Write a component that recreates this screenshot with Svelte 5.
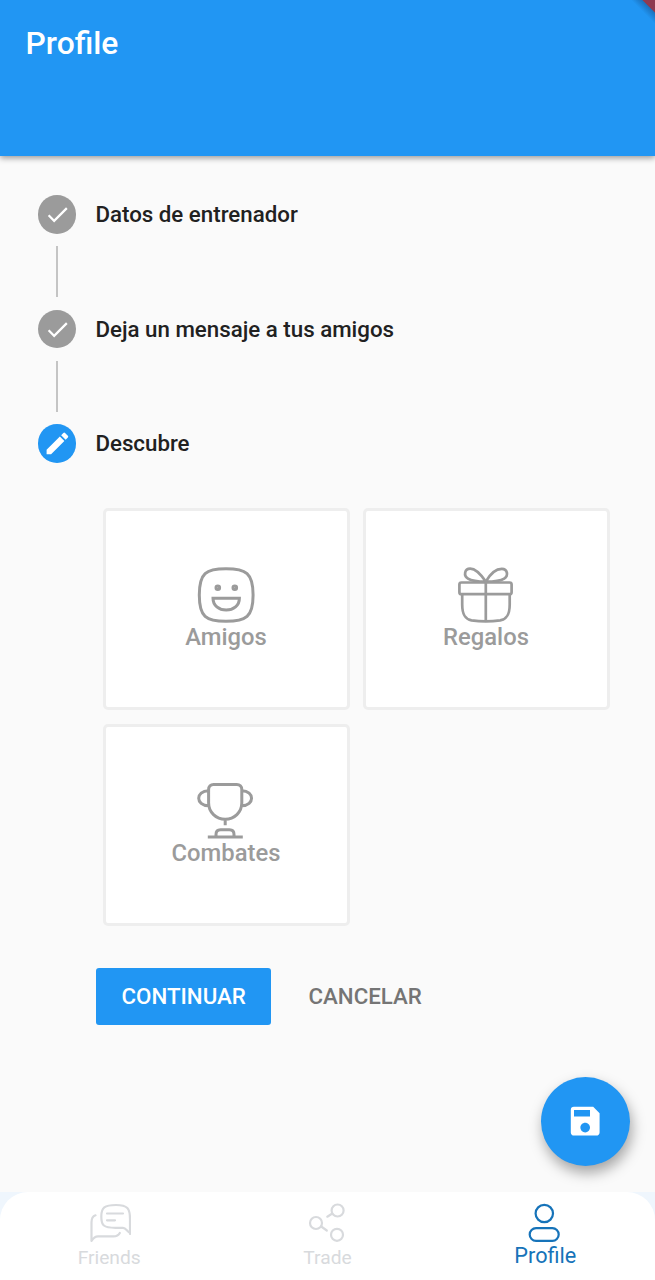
<script lang="ts">
	interface Step {
		title: string;
		active: boolean;
	}

	const steps: Step[] = [
		{ title: 'Datos de entrenador', active: false },
		{ title: 'Deja un mensaje a tus amigos', active: false },
		{ title: 'Descubre', active: true }
	];

	const options = ['Amigos', 'Regalos', 'Combates'];
	const tabs = ['Friends', 'Trade', 'Profile'];

	let selected = $state('Profile');
</script>

<div class="screen">
	<header>
		<h1>Profile</h1>
		<span class="ribbon"></span>
	</header>

	<main>
		{#each steps as step, i}
			{#if i > 0}
				<div class="line"></div>
			{/if}
			<div class="step">
				<span class="badge" class:active={step.active}>
					<svg viewBox="0 0 24 24">
						{#if step.active}
							<path d="M3 17.25V21h3.75L17.81 9.94l-3.75-3.75L3 17.25zM20.71 7.04a1 1 0 0 0 0-1.41l-2.34-2.34a1 1 0 0 0-1.41 0l-1.83 1.83 3.75 3.75 1.83-1.83z" />
						{:else}
							<path d="M9 16.17 4.83 12l-1.42 1.41L9 19 21 7l-1.41-1.41z" />
						{/if}
					</svg>
				</span>
				<h2>{step.title}</h2>
			</div>
		{/each}

		<div class="options">
			{#each options as option}
				<button class="card">
					<svg viewBox="0 0 60 60">
						{#if option === 'Amigos'}
							<path d="M30 3.8C50 3.8 57.1 8 57.1 30S50 56.3 30 56.3 3.3 52 3.3 30 10 3.8 30 3.8z" />
							<circle cx="21.8" cy="22.7" r="1.8" />
							<circle cx="38.8" cy="22.7" r="1.8" />
							<path d="M17 33.2h26.4C43.4 40.5 37.5 45 30.2 45S17 40.5 17 33.2z" />
						{:else if option === 'Regalos'}
							<g stroke-width="2.7">
								<path d="M29.8 16.6C25 9.5 20 3.6 14.2 3.6 8.5 3.6 7.3 10.7 12 13.6c4 2.5 11 3 17.8 3z" />
								<path d="M29.8 16.6c4-7 10-12.8 16-12.8 5.7 0 7 7 2.4 9.8-4 2.5-11.6 3-18.4 3z" />
								<rect x="3.4" y="17.5" width="52.2" height="11.7" rx="2" />
								<path d="M6.200 29.500v10c0 10.500 3 14.600 9.300 15.900 9 1.300 19.500 1.300 28.700 0 6.500-1.300 9.500-5.400 9.500-15.900v-10M29.800 17v39" />
							</g>
						{:else}
							<path d="M12.6 8.5c0-3 2-5 5-5h23.200c3 0 5 2 5 5v13.300c0 9.500-7.500 16.500-16.600 16.500s-16.600-7-16.600-16.500zM12.600 9.800C-.6 9.800-.6 24.800 12.600 24.800M45.800 9.800c13 0 13 15 0 15M29.200 38.300v6M11.800 56h35M20 56v-2.500c0-3 1.500-4.700 4.500-4.700h9c3 0 4.500 1.700 4.500 4.700V56" />
						{/if}
					</svg>
					<span>{option}</span>
				</button>
			{/each}
		</div>

		<div class="actions">
			<button class="continue">CONTINUAR</button>
			<button class="cancel">CANCELAR</button>
		</div>
	</main>

	<button class="fab" aria-label="Guardar">
		<svg viewBox="0 0 24 24">
			<path d="M17 3H5a2 2 0 0 0-2 2v14c0 1.100.890 2 2 2h14c1.100 0 2-.9 2-2V7l-4-4zm-5 16c-1.660 0-3-1.340-3-3s1.340-3 3-3 3 1.340 3 3-1.340 3-3 3zm3-10H5V5h10v4z" />
		</svg>
	</button>

	<div class="nav-wrap">
		<nav>
			{#each tabs as tab}
				<button class="tab" class:selected={selected === tab} onclick={() => (selected = tab)}>
					<svg viewBox="0 0 44 40">
						{#if tab === 'Friends'}
							<path d="M43 31V16C43 5.500 40.500 2 29 2S14.300 4.500 14.300 13.500 16.500 24.800 28.500 24.800H36c3 0 4.500 4.200 7 5zM20 10.500h16M20 17.300h8M8.500 12.300c-3 1-4 3.200-4 7V38c1.600-2.600 3.500-4.600 6.500-4.600h15.500c3 0 5-1 6.300-3.400" />
						{:else if tab === 'Trade'}
							<circle cx="32.6" cy="7.500" r="6" />
							<circle cx="11" cy="20" r="6" />
							<circle cx="32" cy="31.800" r="6" />
							<path d="m27.300 10.500-5 3.200M16.200 23.500l5.600 4" />
						{:else}
							<circle cx="21.3" cy="10.500" r="8.700" />
							<rect x="6.700" y="25.200" width="29" height="12.700" rx="6.300" />
						{/if}
					</svg>
					<span>{tab}</span>
				</button>
			{/each}
		</nav>
	</div>
</div>

<style>
	:global(body) {
		margin: 0;
		background: #fafafa;
	}

	.screen {
		position: relative;
		display: flex;
		flex-direction: column;
		height: 1280px;
		overflow: hidden;
		background: #fafafa;
		font-family: Roboto, 'Liberation Sans', sans-serif;
	}

	button {
		padding: 0;
		border: none;
		background: none;
		font-family: inherit;
	}

	header {
		position: relative;
		height: 156px;
		flex: none;
		box-sizing: border-box;
		padding: 24px 25.5px;
		background: #2196f3;
		box-shadow: 0 2px 6px rgba(0, 0, 0, 0.4);
	}

	h1 {
		margin: 0;
		font-size: 31.8px;
		line-height: 38px;
		font-weight: 500;
		color: white;
	}

	.ribbon {
		position: absolute;
		top: 0;
		right: 0;
		width: 40px;
		height: 40px;
		background: linear-gradient(45deg, transparent 70%, rgba(20, 60, 110, 0.4) 83.5%, #8f3a50 85%);
	}

	main {
		flex: 1;
		padding: 39px 38px 0;
	}

	.step {
		display: flex;
		align-items: center;
		gap: 19px;
		height: 39px;
	}

	.badge {
		display: flex;
		align-items: center;
		justify-content: center;
		width: 38.4px;
		height: 38.4px;
		border-radius: 50%;
		background: #9b9b9b;
	}

	.badge.active {
		background: #2196f3;
	}

	.badge svg {
		width: 28.8px;
		fill: white;
	}

	.badge:not(.active) svg {
		width: 27px;
	}

	h2 {
		margin: -1px 0 0;
		font-size: 22.3px;
		line-height: 28px;
		font-weight: 500;
		color: #212121;
	}

	.line {
		width: 2px;
		height: 51px;
		margin: 12.3px 0 12.3px 18px;
		background: #c4c4c4;
	}

	.options {
		display: grid;
		grid-template-columns: 247px 247px;
		gap: 14px 13px;
		margin: 45px 0 0 65px;
	}

	.card {
		display: flex;
		flex-direction: column;
		align-items: center;
		justify-content: center;
		height: 202px;
		padding: 0 1px 3px 0;
		border: 3px solid #eee;
		border-radius: 5px;
		background: white;
		color: #9b9b9b;
	}

	.card svg {
		width: 60px;
		height: 60px;
		fill: none;
		stroke: currentColor;
		stroke-width: 3;
	}

	.card span {
		margin-top: -2px;
		font-size: 23.8px;
		line-height: 28px;
		font-weight: 500;
	}

	.actions {
		display: flex;
		gap: 12px;
		margin: 42px 0 0 57.5px;
	}

	.actions button {
		height: 57px;
		padding: 0 26px 1px;
		border-radius: 3px;
		font-size: 22.3px;
		font-weight: 500;
	}

	.continue {
		width: 175px;
		background: #2196f3;
		color: white;
	}

	.cancel {
		color: #757575;
	}

	.fab {
		position: absolute;
		right: 25.5px;
		top: 1076.5px;
		display: flex;
		align-items: center;
		justify-content: center;
		width: 89px;
		height: 89px;
		border-radius: 50%;
		background: #2196f3;
		box-shadow: 2px 7px 14px rgba(0, 0, 0, 0.35);
	}

	.fab svg {
		width: 38.4px;
		fill: white;
	}

	.nav-wrap {
		flex: none;
		background: linear-gradient(90deg, #eff6fd 30px, #fafafa 30px calc(100% - 30px), #eff6fd calc(100% - 30px));
	}

	nav {
		display: grid;
		grid-template-columns: repeat(3, 1fr);
		height: 88px;
		border-radius: 28px 28px 0 0;
		background: white;
	}

	.tab {
		display: flex;
		flex-direction: column;
		align-items: center;
		padding-top: 11px;
		font-size: 19.2px;
		color: #d8dadd;
	}

	.tab svg {
		width: 44px;
		height: 40px;
		fill: none;
		stroke: currentColor;
		stroke-width: 2.2;
		stroke-linecap: round;
		stroke-linejoin: round;
	}

	.tab span {
		margin-top: 2.5px;
		line-height: 24px;
	}

	.tab.selected {
		padding-right: 1px;
		font-size: 21.7px;
		color: #1673b9;
	}

	.tab.selected span {
		margin-top: 1px;
	}
</style>
